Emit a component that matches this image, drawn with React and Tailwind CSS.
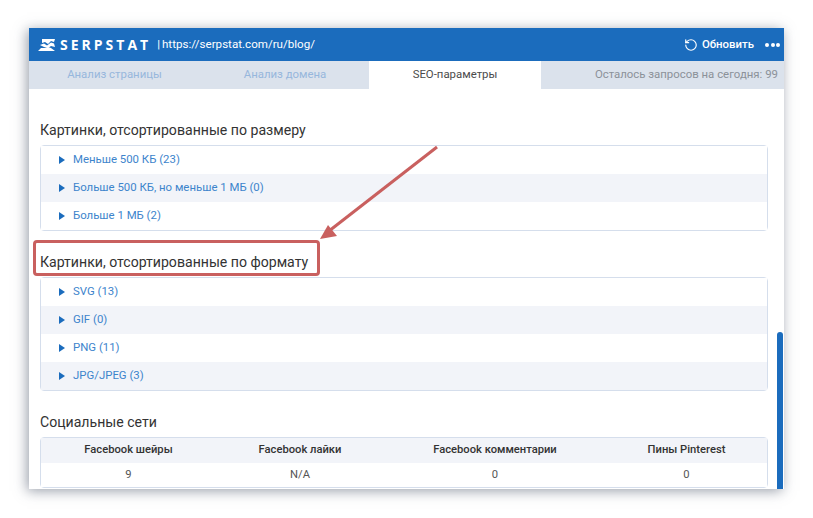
import { RotateCcw } from "lucide-react";

const sizeRows = ["Меньше 500 КБ (23)", "Больше 500 КБ, но меньше 1 МБ (0)", "Больше 1 МБ (2)"];
const formatRows = ["SVG (13)", "GIF (0)", "PNG (11)", "JPG/JPEG (3)"];
const socialCols = [
  ["Facebook шейры", "9"],
  ["Facebook лайки", "N/A"],
  ["Facebook комментарии", "0"],
  ["Пины Pinterest", "0"],
];

function Logo() {
  return (
    <svg width="18" height="12" viewBox="0 0 18 12" fill="white" className="shrink-0">
      <path d="M4 0h13l-1 3-3-1-3 3-3-2-3 1z" />
      <path d="M2 6l4-1.500 3 2 4-3 3 1 1 3.500-4-1-3 2-4-1z" />
      <path d="M0 12l3-3 4 0 3-1 3 1 4 3z" />
    </svg>
  );
}

function Accordion({ rows }) {
  return (
    <div className="mt-[6px] rounded-sm border border-[#d5deec]">
      {rows.map((row, i) => (
        <div
          key={row}
          className={`flex h-[28px] items-center pl-[18px] ${i % 2 === 1 ? "bg-[#f2f4f9]" : "bg-white"}`}
        >
          <span className="h-0 w-0 border-y-[4px] border-l-[6px] border-y-transparent border-l-[#1b6cbd]" />
          <span className="ml-[8px] text-[11.4px] text-[#3d84cc]">{row}</span>
        </div>
      ))}
    </div>
  );
}

export default function App() {
  return (
    <div className="h-[518px] w-[813px] overflow-hidden bg-white pl-[29px] pt-[28px] font-['Roboto',sans-serif]">
      <div className="relative h-[461px] w-[755px] overflow-hidden bg-white shadow-[-2px_2px_12px_rgba(70,80,100,0.55)]">
        <div className="flex h-[33px] items-center bg-[#1b6cbd] pl-[9px] pr-[4px] text-white">
          <Logo />
          <span className="ml-[4px] font-['Open_Sans',sans-serif] text-[14px] font-bold leading-none tracking-[3px]">SERPSTAT</span>
          <span className="ml-[6px] text-[11.5px] leading-none">|</span>
          <span className="ml-[2px] text-[11.6px]">https://serpstat.com/ru/blog/</span>
          <RotateCcw size={14} strokeWidth={2} className="ml-auto" />
          <span className="ml-[4px] text-[11.4px] font-medium">Обновить</span>
          <span className="ml-[11px] flex gap-[1.5px]">
            <i className="h-[4px] w-[4px] rounded-full bg-white" />
            <i className="h-[4px] w-[4px] rounded-full bg-white" />
            <i className="h-[4px] w-[4px] rounded-full bg-white" />
          </span>
        </div>

        <div className="flex h-[28px] items-center bg-[#dbe2ec] text-[11.4px]">
          <div className="w-[170px] pl-[1px] text-center text-[#97b7dc]">Анализ страницы</div>
          <div className="w-[170px] pl-[2px] text-center text-[#97b7dc]">Анализ домена</div>
          <div className="flex h-full w-[172px] items-center justify-center bg-white text-[#4b4b4b]">SEO-параметры</div>
          <div className="flex-1 pr-[6px] text-right text-[#8b9199]">Осталось запросов на сегодня: 99</div>
        </div>

        <div className="pl-[11px] pr-[16px] pt-[32px] text-[#333]">
          <h2 className="text-[14.1px] font-normal leading-[18px]">Картинки, отсортированные по размеру</h2>
          <Accordion rows={sizeRows} />

          <h2 className="mt-[22px] text-[14.1px] font-normal leading-[18px]">Картинки, отсортированные по формату</h2>
          <Accordion rows={formatRows} />

          <h2 className="mt-[22px] text-[14.1px] font-normal leading-[18px]">Социальные сети</h2>
          <div className="mt-[6px] grid grid-cols-[175px_168px_222px_161px] rounded-sm border border-[#d5deec] text-center text-[11.2px]">
            {socialCols.map(([head]) => (
              <div key={head} className="flex h-[25px] items-center justify-center bg-[#f2f4f9] font-medium text-[#333]">{head}</div>
            ))}
            {socialCols.map(([head, value]) => (
              <div key={head} className="flex h-[24px] items-center justify-center bg-white text-[#555]">{value}</div>
            ))}
          </div>
        </div>

        <div className="absolute bottom-0 right-[1px] h-[157px] w-[6px] rounded-t-sm bg-[#1b6cbd]" />

        {/* красная рамка и стрелка поверх контента */}
        <div className="absolute left-[4px] top-[212px] h-[36px] w-[287px] rounded-[4px] border-[3px] border-[#c9605f]" />
        <svg className="absolute left-0 top-0" width="755" height="461" fill="none">
          <path d="M408 119L300 203" stroke="#c9605f" strokeWidth="3" />
          <path d="M291 211L299 197L308 208Z" fill="#c9605f" />
        </svg>
      </div>
    </div>
  );
}
